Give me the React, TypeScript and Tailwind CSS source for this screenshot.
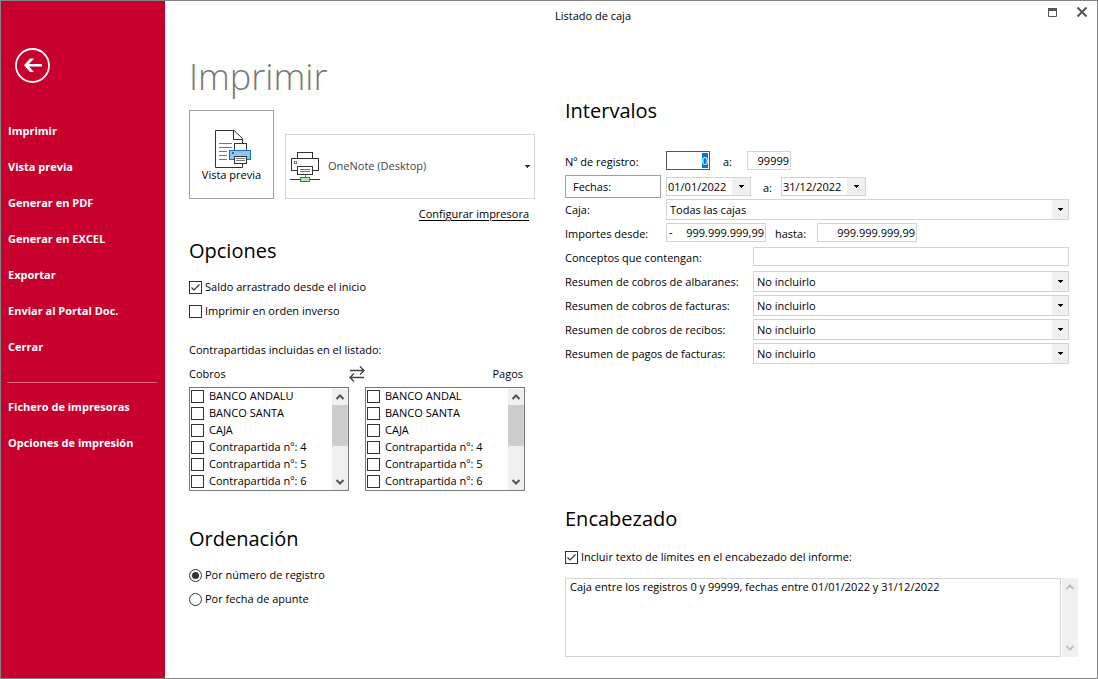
import { useEffect, useRef, useState } from "react";
import clsx from "clsx";

const menuItems = [
  "Imprimir",
  "Vista previa",
  "Generar en PDF",
  "Generar en EXCEL",
  "Exportar",
  "Enviar al Portal Doc.",
  "Cerrar",
];

const setupItems = ["Fichero de impresoras", "Opciones de impresión"];

const cobros = ["BANCO ANDALU", "BANCO SANTA", "CAJA", "Contrapartida nº: 4", "Contrapartida nº: 5", "Contrapartida nº: 6"];
const pagos = ["BANCO ANDAL", "BANCO SANTA", "CAJA", "Contrapartida nº: 4", "Contrapartida nº: 5", "Contrapartida nº: 6"];

const summaries = [
  { id: "albaranes", label: "Resumen de cobros de albaranes:" },
  { id: "facturas", label: "Resumen de cobros de facturas:" },
  { id: "recibos", label: "Resumen de cobros de recibos:" },
  { id: "pagos", label: "Resumen de pagos de facturas:" },
];

function PreviewIcon() {
  return (
    <svg width="39" height="40" viewBox="-2 0 39 40" fill="none" aria-hidden="true">
      <path d="M28.5 14V9.5L20 1.5H1.5V38.5H28.5V35" stroke="#333" />
      <path d="M19.5 1.5V10.5H28.5" stroke="#333" />
      <path d="M5 14.5H18M5 18.5H18M5 22.5H13M5 26.5H13M5 30.5H13" stroke="#777" />
      <rect x="20.5" y="14.5" width="12" height="8" fill="#fff" stroke="#333" />
      <rect x="15.5" y="21.5" width="21" height="9" fill="#8fc6ef" stroke="#1a6fb8" />
      <rect x="18" y="23" width="2" height="2" fill="#1a6fb8" />
      <rect x="20.5" y="27.5" width="12" height="7" fill="#fff" stroke="#333" />
      <path d="M22 29.5H31M22 31.5H31" stroke="#777" />
    </svg>
  );
}

function PrinterIcon() {
  return (
    <svg width="31" height="32" viewBox="0 0 31 32" fill="none" aria-hidden="true">
      <rect x="7.5" y="1.5" width="15" height="6" fill="#fff" stroke="#333" />
      <rect x="1.5" y="7.5" width="27" height="12" fill="#fff" stroke="#333" />
      <rect x="4.5" y="10.5" width="2" height="2" stroke="#777" />
      <rect x="7.5" y="15.5" width="15" height="8" fill="#fff" stroke="#333" />
      <path d="M10 18.5H20M10 20.5H20M15.5 24V26" stroke="#777" />
      <path d="M0 28.5H30" stroke="#333" />
      <rect x="10.5" y="26.5" width="9" height="4" fill="#b5e2bd" stroke="#189a45" />
    </svg>
  );
}

function Caret() {
  return (
    <svg width="5" height="3" viewBox="0 0 5 3" shapeRendering="crispEdges" aria-hidden="true">
      <path d="M0 0H5V1H4V2H3V3H2V2H1V1H0Z" fill="currentColor" />
    </svg>
  );
}

function Chevron({ up = false }: { up?: boolean }) {
  return (
    <svg width="8" height="6" viewBox="0 0 8 6" fill="none" aria-hidden="true">
      <path d={up ? "M0.5 5L4 1.5L7.5 5" : "M0.5 1L4 4.5L7.5 1"} stroke="currentColor" strokeWidth="2" />
    </svg>
  );
}

function Check({ label, checked = false, className }: { label: string; checked?: boolean; className?: string }) {
  return (
    <label className={clsx("flex items-center", className)}>
      <span className="grid shrink-0 place-items-center">
        <input
          type="checkbox"
          defaultChecked={checked}
          className="peer col-start-1 row-start-1 size-[13px] appearance-none border border-[#333] bg-white"
        />
        <svg width="9" height="7" viewBox="0 0 9 7" fill="none" className="invisible pointer-events-none col-start-1 row-start-1 peer-checked:visible">
          <path d="M0.5 3.5L3 6L8.5 0.5" stroke="#333" strokeWidth="1.2" />
        </svg>
      </span>
      <span>{label}</span>
    </label>
  );
}

function Radio({ label, value, current, onChange }: { label: string; value: string; current: string; onChange: (v: string) => void }) {
  return (
    <label className="flex h-6 items-center gap-[3px]">
      <span className="grid shrink-0 place-items-center">
        <input
          type="radio"
          name="orden"
          checked={current === value}
          onChange={() => onChange(value)}
          className="peer col-start-1 row-start-1 size-[13px] appearance-none rounded-full border border-[#333] bg-white"
        />
        <span className="pointer-events-none invisible col-start-1 row-start-1 size-[7px] rounded-full bg-[#333] peer-checked:visible" />
      </span>
      <span>{label}</span>
    </label>
  );
}

function Combo({ id, options }: { id: string; options: string[] }) {
  return (
    <div className="grid h-[21px] flex-1 grid-rows-[19px] border border-[#d3d3d3]">
      <select id={id} className="col-start-1 row-start-1 h-[19px] appearance-none bg-white pl-[3px] leading-[19px] outline-none">
        {options.map((option) => (
          <option key={option}>{option}</option>
        ))}
      </select>
      <span className="pointer-events-none col-start-1 row-start-1 flex w-4 items-center justify-center justify-self-end bg-[#f0f0f0]">
        <Caret />
      </span>
    </div>
  );
}

function DateField({ label, value }: { label: string; value: string }) {
  return (
    <div className="mt-[2px] flex h-[19px] w-[85px] border border-[#d3d3d3]">
      <input aria-label={label} defaultValue={value} className="min-w-0 flex-1 pl-px leading-4 outline-none" />
      <button aria-label="Abrir calendario" className="flex w-[18px] items-center justify-center bg-[#f0f0f0]">
        <Caret />
      </button>
    </div>
  );
}

function CheckList({ label, items }: { label: string; items: string[] }) {
  return (
    <div role="group" aria-label={label} className="flex h-[104px] w-40 border border-[#7a7a7a]">
      <div className="min-w-0 flex-1 overflow-hidden pl-px">
        {items.map((item) => (
          <Check key={item} label={item} className="h-[17px] gap-[5px] whitespace-nowrap" />
        ))}
      </div>
      <div className="flex w-4 flex-col bg-[#f0f0f0] text-[#555]">
        <button aria-label="Subir" className="flex h-[17px] items-center justify-center">
          <Chevron up />
        </button>
        <div className="h-[41px] bg-[#cdcdcd]" />
        <button aria-label="Bajar" className="mt-auto flex h-[17px] items-center justify-center">
          <Chevron />
        </button>
      </div>
    </div>
  );
}

function Sidebar() {
  return (
    <aside className="w-[164px] shrink-0 bg-[#c8002d] pt-[47px] font-bold text-white">
      <button aria-label="Volver" className="ml-[14px] block">
        <svg width="35" height="35" viewBox="0 0 35 35" fill="none">
          <circle cx="17.5" cy="17.5" r="16.5" stroke="#fff" strokeWidth="1.8" />
          <path d="M9 17.2L15 10.5H19L14 16H27V18.4H14L19 24H15Z" fill="#fff" />
        </svg>
      </button>
      <nav className="mt-[30px]">
        {menuItems.map((item) => (
          <a key={item} href="#" className="flex h-9 items-center pl-[7px]">
            {item}
          </a>
        ))}
        <hr className="mt-[17px] mr-2 mb-[6px] ml-[6px] border-[#dd6680]" />
        {setupItems.map((item) => (
          <a key={item} href="#" className="flex h-9 items-center pl-[7px]">
            {item}
          </a>
        ))}
      </nav>
    </aside>
  );
}

function PrintOptions() {
  const [order, setOrder] = useState("registro");

  return (
    <section className="pt-5">
      <h1 className="text-4xl leading-[48px] font-light text-[#777]">Imprimir</h1>

      <div className="mt-[9px] flex items-end justify-between">
        <button className="flex h-[89px] w-[85px] flex-col items-center border border-[#a0a0a0] pt-[18px]">
          <PreviewIcon />
          <span className="leading-3">Vista previa</span>
        </button>
        <div className="grid h-[65px] w-[250px] items-center border border-[#d3d3d3]">
          <select
            aria-label="Impresora"
            className="col-start-1 row-start-1 h-full appearance-none bg-white pl-[42px] text-[#444] outline-none"
          >
            <option>OneNote (Desktop)</option>
          </select>
          <span className="pointer-events-none col-start-1 row-start-1 flex items-center justify-between pr-1 pl-1 text-[#333]">
            <PrinterIcon />
            <Caret />
          </span>
        </div>
      </div>
      <div className="mt-[7px] pr-[6px] text-right leading-4">
        <a href="#" className="underline underline-offset-2">Configurar impresora</a>
      </div>

      <h2 className="mt-[15px] text-xl leading-7">Opciones</h2>
      <div className="mt-[10px]">
        <Check label="Saldo arrastrado desde el inicio" checked className="h-6 gap-[3px]" />
        <Check label="Imprimir en orden inverso" className="h-6 gap-[3px]" />
      </div>

      <p className="mt-[15px] leading-6">Contrapartidas incluidas en el listado:</p>
      <div className="grid h-6 w-[336px] grid-cols-[1fr_auto_1fr] items-center">
        <span>Cobros</span>
        <button aria-label="Intercambiar cobros y pagos">
          <svg width="16" height="16" viewBox="0 0 16 16" fill="none" stroke="#444" strokeWidth="1.4">
            <path d="M1 4.5H15M11 0.5L15 4.5L11 8.5M15 11.5H1M5 7.5L1 11.5L5 15.5" />
          </svg>
        </button>
        <span className="pr-[2px] text-right">Pagos</span>
      </div>
      <div className="mt-px flex gap-4">
        <CheckList label="Cobros" items={cobros} />
        <CheckList label="Pagos" items={pagos} />
      </div>

      <h2 className="mt-[34px] text-xl leading-7">Ordenación</h2>
      <div className="mt-[10px]">
        <Radio label="Por número de registro" value="registro" current={order} onChange={setOrder} />
        <Radio label="Por fecha de apunte" value="fecha" current={order} onChange={setOrder} />
      </div>
    </section>
  );
}

function Ranges() {
  const firstField = useRef<HTMLInputElement>(null);

  useEffect(() => {
    firstField.current?.focus();
    firstField.current?.select();
  }, []);

  return (
    <section className="pt-16">
      <h2 className="text-xl leading-7">Intervalos</h2>

      <div className="mt-[25px] pr-[9px] leading-[22px]">
        <div className="flex h-6 items-start pt-px">
          <label htmlFor="reg-desde" className="w-[101px]">Nº de registro:</label>
          <input
            id="reg-desde"
            ref={firstField}
            defaultValue="0"
            className="h-[19px] w-11 border border-[#555] pr-px text-right leading-4 outline-none selection:bg-[#0078d7] selection:text-white"
          />
          <label htmlFor="reg-hasta" className="w-[37px] pl-[13px]">a:</label>
          <input id="reg-hasta" defaultValue="99999" className="h-[19px] w-11 border border-[#d3d3d3] pr-px text-right leading-4 outline-none" />
        </div>
        <div className="flex h-6 items-start pt-px">
          <button className="mr-[5px] h-[23px] w-24 border border-[#a0a0a0] pl-[7px] text-left">Fechas:</button>
          <DateField label="Fecha desde" value="01/01/2022" />
          <span className="w-[30px] pt-[2px] pl-3">a:</span>
          <DateField label="Fecha hasta" value="31/12/2022" />
        </div>
        <div className="flex h-6 items-start pt-px">
          <label htmlFor="caja" className="w-[101px]">Caja:</label>
          <Combo id="caja" options={["Todas las cajas"]} />
        </div>
        <div className="flex h-6 items-start pt-px">
          <label htmlFor="imp-desde" className="w-[101px]">Importes desde:</label>
          <div className="flex h-[19px] w-[100px] border border-[#d3d3d3] px-px leading-4">
            <span className="pl-px">-</span>
            <input id="imp-desde" defaultValue="999.999.999,99" className="min-w-0 flex-1 text-right outline-none" />
          </div>
          <label htmlFor="imp-hasta" className="w-[51px] pl-[9px]">hasta:</label>
          <input
            id="imp-hasta"
            defaultValue="999.999.999,99"
            className="h-[19px] w-[100px] border border-[#d3d3d3] pr-px text-right leading-4 outline-none"
          />
        </div>
        <div className="flex h-6 items-start pt-px">
          <label htmlFor="conceptos" className="w-[188px]">Conceptos que contengan:</label>
          <input id="conceptos" className="h-[19px] min-w-0 flex-1 border border-[#d3d3d3] px-1 outline-none" />
        </div>
        {summaries.map(({ id, label }) => (
          <div key={id} className="flex h-6 items-start pt-px">
            <label htmlFor={id} className="w-[188px]">{label}</label>
            <Combo id={id} options={["No incluirlo"]} />
          </div>
        ))}
      </div>

      <h2 className="mt-[139px] text-xl leading-7">Encabezado</h2>
      <Check label="Incluir texto de límites en el encabezado del informe:" checked className="mt-3 h-6 gap-[3px]" />
      <div className="mt-[9px] flex h-[79px] gap-px">
        <textarea
          aria-label="Texto del encabezado"
          defaultValue="Caja entre los registros 0 y 99999, fechas entre 01/01/2022 y 31/12/2022"
          className="flex-1 resize-none overflow-hidden border border-[#d3d3d3] px-1 leading-4 outline-none"
        />
        <div className="flex w-4 flex-col items-center justify-between bg-[#f0f0f0] py-[6px] text-[#bfbfbf]">
          <button aria-label="Subir"><Chevron up /></button>
          <button aria-label="Bajar"><Chevron /></button>
        </div>
      </div>
    </section>
  );
}

export default function App() {
  return (
    <div className="flex min-h-screen border border-[#838383] bg-white font-['Open_Sans','Noto_Sans',sans-serif] text-[11px] text-black">
      <Sidebar />
      <div className="min-w-0 flex-1">
        <header className="flex h-8 items-start">
          <p className="flex-1 pt-[7px] text-center leading-4">Listado de caja</p>
          <div className="flex w-19 justify-end gap-5 pt-[6px] pr-[10px]">
            <button aria-label="Maximizar">
              <svg width="9" height="9" viewBox="0 0 9 9" fill="none">
                <path d="M0.5 0.5H8.5V8.5H0.5Z" stroke="#555" />
                <path d="M0 0H9V3H0Z" fill="#555" />
              </svg>
            </button>
            <button aria-label="Cerrar ventana">
              <svg width="10" height="10" viewBox="0 0 10 10" fill="none">
                <path d="M0.5 0.5L9.5 9.5M9.5 0.5L0.5 9.5" stroke="#555" strokeWidth="2" />
              </svg>
            </button>
          </div>
        </header>
        <main className="grid grid-cols-[346px_minmax(0,1fr)] gap-[30px] pr-[19px] pl-6">
          <PrintOptions />
          <Ranges />
        </main>
      </div>
    </div>
  );
}
